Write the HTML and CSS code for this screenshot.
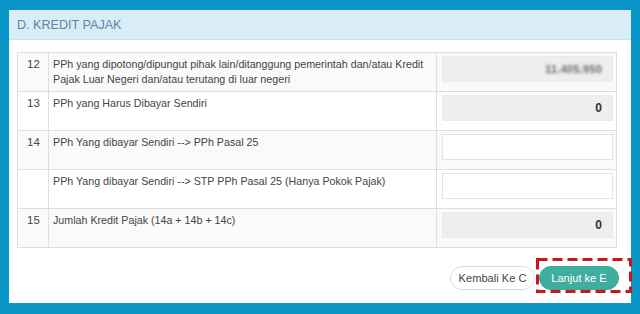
FILE: index.html
```html
<!DOCTYPE html>
<html lang="id">
<head>
<meta charset="utf-8">
<title>D. Kredit Pajak</title>
<link rel="stylesheet" href="styles.css">
</head>
<body>
<div class="panel">
  <div class="panel-heading">D. KREDIT PAJAK</div>
  <div class="panel-body">
    <table class="grid">
      <colgroup><col class="c-no"><col class="c-label"><col class="c-val"></colgroup>
      <tr class="odd">
        <td class="no">12</td>
        <td class="label">PPh yang dipotong/dipungut pihak lain/ditanggung pemerintah dan/atau Kredit Pajak Luar Negeri dan/atau terutang di luar negeri</td>
        <td class="val"><div class="field ro"><span class="blur">11.405.950</span></div></td>
      </tr>
      <tr>
        <td class="no">13</td>
        <td class="label">PPh yang Harus Dibayar Sendiri</td>
        <td class="val"><div class="field ro">0</div></td>
      </tr>
      <tr class="odd">
        <td class="no">14</td>
        <td class="label">PPh Yang dibayar Sendiri --&gt; PPh Pasal 25</td>
        <td class="val"><div class="field"></div></td>
      </tr>
      <tr>
        <td class="no"></td>
        <td class="label">PPh Yang dibayar Sendiri --&gt; STP PPh Pasal 25 (Hanya Pokok Pajak)</td>
        <td class="val"><div class="field"></div></td>
      </tr>
      <tr class="odd">
        <td class="no">15</td>
        <td class="label">Jumlah Kredit Pajak (14a + 14b + 14c)</td>
        <td class="val"><div class="field ro">0</div></td>
      </tr>
    </table>
    <div class="actions">
      <button class="btn btn-back">Kembali Ke C</button>
      <button class="btn btn-next">Lanjut ke E</button>
    </div>
  </div>
  <svg class="highlight" width="96" height="35" viewBox="0 0 96 35"><rect x="1.5" y="1.5" width="93" height="32" fill="none" stroke="#c8161f" stroke-width="3" stroke-dasharray="10 5"/></svg>
</div>
</body>
</html>
```

FILE: styles.css
```css
html, body {
  margin: 0;
  padding: 0;
}
body {
  width: 640px;
  height: 314px;
  background: #0a96c6;
  padding: 10px 9px 11px 9px;
  box-sizing: border-box;
  font-family: "Liberation Sans", Arial, sans-serif;
  color: #333;
}
.panel {
  position: relative;
  background: #fff;
  height: 293px;
  box-sizing: border-box;
}
.panel-heading {
  height: 30px;
  box-sizing: border-box;
  background: #d9edf7;
  border-bottom: 1px solid #c9e2ee;
  color: #5b87a3;
  font-size: 12.6px;
  line-height: 30px;
  padding-left: 8px;
}
.panel-body {
  padding: 12px 14px 0 8px;
}
.grid {
  width: 600px;
  border-collapse: collapse;
  font-size: 10.7px;
  line-height: 15px;
  table-layout: fixed;
}
.c-no { width: 31px; }
.c-val { width: 180px; }
.grid td {
  border: 1px solid #dfdfdf;
  vertical-align: top;
  height: 30px;
  padding: 4px 2px 4px 4px;
}
.grid tr.odd td { background: #fafafa; }
.grid td.no {
  text-align: center;
  color: #444;
  padding-left: 3px;
  font-size: 11.5px;
}
.grid td.label {
  color: #444;
  padding-left: 4px;
}
.grid td.val {
  padding: 3px 3px 4px 5px;
}
.field {
  height: 26px;
  box-sizing: border-box;
  border: 1px solid #e4e4e4;
  background: #fff;
  font-size: 12px;
  font-weight: bold;
  line-height: 24px;
  text-align: right;
  padding-right: 10px;
  color: #333;
}
.field.ro {
  background: #eeeeee;
  border-color: #ebebeb;
}
.blur {
  color: transparent;
  text-shadow: 0 0 3px #6f6f6f;
  font-size: 11.5px;
  font-weight: bold;
}
.actions {
  display: flex;
  justify-content: flex-end;
  gap: 4px;
  margin-top: 18px;
  margin-right: -2px;
}
.btn {
  height: 24px;
  border-radius: 12px;
  font-family: "Liberation Sans", Arial, sans-serif;
  font-size: 11.1px;
  padding: 0 4px;
  line-height: 22px;
  white-space: nowrap;
  cursor: pointer;
}
.btn-back {
  width: 85px;
  background: #fff;
  border: 1px solid #dcdcdc;
  color: #444;
}
.btn-next {
  width: 80px;
  background: #3fae9e;
  border: 1px solid #3aa595;
  color: #fff;
}
.highlight {
  position: absolute;
  left: 527px;
  top: 248px;
}
```
